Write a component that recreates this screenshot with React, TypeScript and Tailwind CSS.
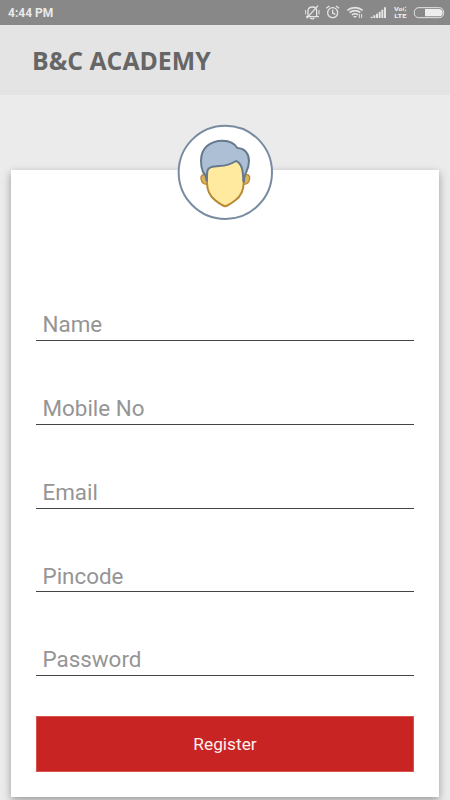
const fields = ["Name", "Mobile No", "Email", "Pincode", "Password"];

function StatusIcons() {
    return (
        <svg width="160" height="25" viewBox="0 0 480 75" fill="none" stroke="#e4e4e4" strokeWidth="4">
            {/* muted bell */}
            <path d="M54 50V33c0-8 5-12 13-12s13 4 13 12v17M48 50h39M61 54c3 3 9 3 12 0" />
            <path d="M84 17L50 55" />
            <path d="M47 30v13M87 30v13" strokeWidth="3" />
            {/* alarm */}
            <circle cx="128" cy="38" r="15" />
            <path d="M128 29v10l8 4M109 25l9-7M147 25l-9-7" />
            {/* wifi */}
            <path d="M172 31c13-11 33-11 46 0M179 38c9-8 23-8 32 0M186 45c5-5 13-5 18 0" strokeWidth="5" />
            <path d="M189 48h12l-6 6z" fill="#e4e4e4" stroke="none" />
            <path d="M208 42v12M215 42v12" strokeWidth="3" />
            {/* signal */}
            <path
                d="M242 50h6v4h-6zM250 46h6v8h-6zM258 41h6v13h-6zM266 35h6v19h-6zM274 29h6v25h-6zM282 22h6v32h-6z"
                fill="#e4e4e4"
                stroke="none"
            />
            <g fill="#f0f0f0" stroke="none" fontFamily="Roboto, sans-serif" fontWeight="700" fontSize="17">
                <text x="312" y="33" textLength="26" lengthAdjust="spacingAndGlyphs">
                    Vo
                </text>
                <text x="313" y="54" textLength="37" lengthAdjust="spacingAndGlyphs">
                    LTE
                </text>
            </g>
            <path d="M341 22v11M347 20v4M347 29v5" strokeWidth="3" />
            {/* battery */}
            <rect x="373" y="23" width="88" height="30" rx="13" strokeWidth="3" />
            <path d="M405 27h42c7 0 11 4 11 11s-4 11-11 11h-42z" fill="#eeeeee" stroke="none" />
        </svg>
    );
}

function Avatar() {
    return (
        <svg width="96" height="96" viewBox="36 27 288 288" strokeLinejoin="round" strokeLinecap="round">
            <circle cx="181" cy="172" r="140" fill="#fff" stroke="#788ba0" strokeWidth="6" />
            <path
                d="M126 179c-12-3-20 2-18 13 2 10 8 16 17 16M236 179c12-3 20 2 18 13-2 10-8 16-17 16"
                fill="#dbb35c"
                stroke="#b98a35"
                strokeWidth="4"
            />
            <path
                d="M126 165v38c0 24 8 40 25 53 10 8 19 15 30 18 11-3 20-10 30-18 17-13 25-29 25-53v-40l-12-30-70 5z"
                fill="#ffeaa0"
                stroke="#b98a35"
                strokeWidth="6"
            />
            <path
                d="M125 197c-1-13-4-19-11-26-4-10-6-22-6-34 0-37 26-60 65-60 18 0 35 7 44 22 24 1 35 19 35 39 0 18-6 28-11 40-3 6-4 11-4 22l-2-2c0-26-3-54-22-60-16 10-29 14-50 15-21 1-33 3-36 15-1 9-1 20-2 29z"
                fill="#adbfd4"
                stroke="#66798d"
                strokeWidth="6"
            />
        </svg>
    );
}

export default function App() {
    return (
        <div className="flex h-[800px] w-[450px] flex-col overflow-hidden bg-[#ebebeb] font-[Roboto,sans-serif]">
            <div className="flex h-[25px] shrink-0 items-center justify-between bg-[#888888] pl-2">
                <span className="text-[12px] leading-none font-bold text-[#e9e9e9]">4:44 PM</span>
                <StatusIcons />
            </div>
            <header className="flex h-[70px] shrink-0 items-center bg-[#e4e4e4] pl-8">
                <h1 className="font-['Open_Sans',sans-serif] text-[24.8px] leading-none font-bold text-[#666666]">B&amp;C ACADEMY</h1>
            </header>
            <main className="mx-[11px] mt-[75px] flex h-[627px] shrink-0 flex-col bg-white px-[25px] shadow-[0_3px_8px_rgba(0,0,0,0.35)]">
                <div className="-mt-[46px] ml-[141px] h-[133.25px] shrink-0">
                    <Avatar />
                </div>
                {fields.map((field) => (
                    <label key={field} className="flex h-[83.75px] items-end border-b border-[#444444] pb-[2.6px] pl-[6.5px] text-[22.4px] leading-[26px] text-[#959595]">
                        {field}
                    </label>
                ))}
                <button className="mt-10 h-[56px] w-full border border-[#d9534f] bg-[#c92424] pt-px text-[17.3px] text-[#fdf0ee]">Register</button>
            </main>
        </div>
    );
}
